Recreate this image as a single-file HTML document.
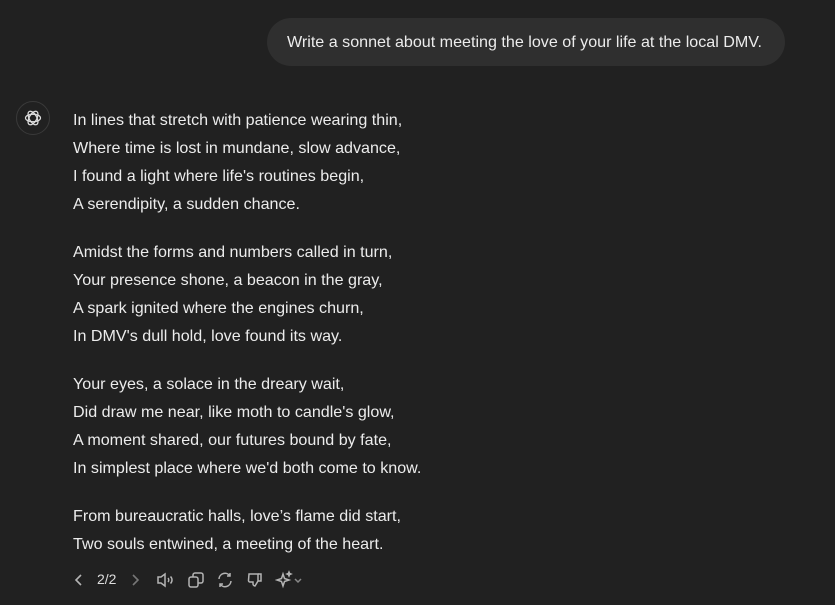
<!DOCTYPE html>
<html><head><style>
body{margin:0;width:835px;height:605px;background:#212121;font-family:"Liberation Sans",sans-serif;color:#ececec;overflow:hidden;position:relative}
.bubble{position:absolute;left:267px;top:18px;width:518px;height:48px;border-radius:24px;background:#2f2f2f;box-sizing:border-box;padding-left:20px;line-height:48px;font-size:16.1px;white-space:nowrap}
.av{position:absolute;left:16px;top:101px;width:32px;height:32px;border:1px solid #3a3a3a;border-radius:50%;display:flex;align-items:center;justify-content:center}
.poem{position:absolute;left:73px;top:106px;font-size:16.1px;line-height:28px}
.poem p{margin:0 0 20px;white-space:nowrap}
.tb{position:absolute;top:570px;left:72px;height:20px;display:flex;align-items:center;color:#b4b4b4}
.tb svg{position:absolute}
</style></head><body>
<div class="bubble">Write a sonnet about meeting the love of your life at the local DMV.</div>
<div class="av"><svg width="20" height="20" viewBox="0 0 24 24" fill="none" stroke="#ddd" stroke-width="1.5"><ellipse cx="12" cy="12" rx="9" ry="4.5"/><ellipse cx="12" cy="12" rx="9" ry="4.5" transform="rotate(60 12 12)"/><ellipse cx="12" cy="12" rx="9" ry="4.5" transform="rotate(120 12 12)"/></svg></div>
<div class="poem">
<p>In lines that stretch with patience wearing thin,<br>Where time is lost in mundane, slow advance,<br>I found a light where life's routines begin,<br>A serendipity, a sudden chance.</p>
<p>Amidst the forms and numbers called in turn,<br>Your presence shone, a beacon in the gray,<br>A spark ignited where the engines churn,<br>In DMV's dull hold, love found its way.</p>
<p>Your eyes, a solace in the dreary wait,<br>Did draw me near, like moth to candle's glow,<br>A moment shared, our futures bound by fate,<br>In simplest place where we'd both come to know.</p>
<p>From bureaucratic halls, love’s flame did start,<br>Two souls entwined, a meeting of the heart.</p>
</div>
<div class="tb">
<svg style="left:2px;top:3px" width="10" height="14" viewBox="0 0 10 14" fill="none" stroke="#b4b4b4" stroke-width="1.6"><path d="M7 2L2 7l5 5"/></svg>
<span style="position:absolute;left:25px;top:1px;font-size:14px;color:#ddd">2/2</span>
<svg style="left:58px;top:3px" width="10" height="14" viewBox="0 0 10 14" fill="none" stroke="#777" stroke-width="1.6"><path d="M3 2l5 5-5 5"/></svg>
<svg style="left:84px;top:1px" width="18" height="18" viewBox="0 0 18 18" fill="none" stroke="#b4b4b4" stroke-width="1.5"><path d="M2 6h3l4-3v12l-4-3H2z"/><path d="M12 7c1 1 1 3 0 4M14.5 5.5c2 2 2 5 0 7"/></svg>
<svg style="left:115px;top:1px" width="18" height="18" viewBox="0 0 18 18" fill="none" stroke="#b4b4b4" stroke-width="1.5"><rect x="2" y="6" width="9" height="10" rx="2"/><path d="M6 6V4a2 2 0 0 1 2-2h6a2 2 0 0 1 2 2v6a2 2 0 0 1-2 2h-3"/></svg>
<svg style="left:144px;top:1px" width="18" height="18" viewBox="0 0 18 18" fill="none" stroke="#b4b4b4" stroke-width="1.5"><path d="M3 8a6 6 0 0 1 11-3M15 10a6 6 0 0 1-11 3"/><path d="M14 2v3h-3M4 16v-3h3"/></svg>
<svg style="left:174px;top:1px" width="18" height="18" viewBox="0 0 18 18" fill="none" stroke="#b4b4b4" stroke-width="1.5"><path d="M3 3h9v7l-3 5c-1 0-2-1-2-2v-2H4a1.5 1.5 0 0 1-1.5-1.7z"/><path d="M12 3h3v7h-3"/></svg>
<svg style="left:203px;top:0px" width="30" height="20" viewBox="0 0 30 20" fill="none" stroke="#b4b4b4" stroke-width="1.5"><path d="M8 4l1.5 4.5L14 10l-4.5 1.5L8 16l-1.5-4.5L2 10l4.5-1.5z"/><path d="M14 2l.6 1.4L16 4l-1.4.6L14 6l-.6-1.4L12 4l1.4-.6z"/><path d="M20 9l3 3 3-3" stroke="#888"/></svg>
</div>
</body></html>
